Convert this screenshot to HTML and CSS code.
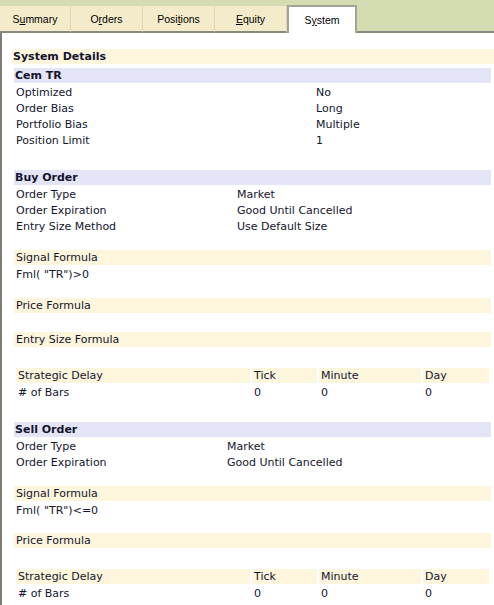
FILE: index.html
```html
<!DOCTYPE html>
<html lang="en">
<head>
    <meta charset="UTF-8">
    <title>System</title>
    <link rel="stylesheet" href="styles.css">
</head>
<body>
    <div class="tabs">
        <div class="tab first">S<u>u</u>mmary</div>
        <div class="tab">O<u>r</u>ders</div>
        <div class="tab">Posi<u>t</u>ions</div>
        <div class="tab"><u>E</u>quity</div>
        <div class="tab active">S<u>y</u>stem</div>
        <div class="fill"></div>
    </div>

    <div class="panel">
        <div class="title">System Details</div>

        <div class="head">Cem TR</div>
        <div class="kv kv-300">
            <span>Optimized</span><span>No</span>
            <span>Order Bias</span><span>Long</span>
            <span>Portfolio Bias</span><span>Multiple</span>
            <span>Position Limit</span><span>1</span>
        </div>

        <div class="head gap-22">Buy Order</div>
        <div class="kv kv-221">
            <span>Order Type</span><span>Market</span>
            <span>Order Expiration</span><span>Good Until Cancelled</span>
            <span>Entry Size Method</span><span>Use Default Size</span>
        </div>

        <div class="band gap-16">Signal Formula</div>
        <div class="line">Fml( "TR")&gt;0</div>
        <div class="band gap-16">Price Formula</div>
        <div class="band gap-19">Entry Size Formula</div>

        <div class="delay gap-21">
            <span class="cell">Strategic Delay</span><span class="cell">Tick</span><span class="cell">Minute</span><span class="cell">Day</span>
            <span># of Bars</span><span>0</span><span>0</span><span>0</span>
        </div>

        <div class="head gap-22">Sell Order</div>
        <div class="kv kv-211">
            <span>Order Type</span><span>Market</span>
            <span>Order Expiration</span><span>Good Until Cancelled</span>
        </div>

        <div class="band gap-16">Signal Formula</div>
        <div class="line">Fml( "TR")&lt;=0</div>
        <div class="band gap-15">Price Formula</div>

        <div class="delay gap-21">
            <span class="cell">Strategic Delay</span><span class="cell">Tick</span><span class="cell">Minute</span><span class="cell">Day</span>
            <span># of Bars</span><span>0</span><span>0</span><span>0</span>
        </div>
    </div>
</body>
</html>
```

FILE: styles.css
```css
body {
    margin: 0;
    background: #fff;
    font-family: "DejaVu Sans", Verdana, sans-serif;
    font-size: 11px;
    color: #14142e;
}
.tabs {
    display: flex;
    align-items: flex-end;
    height: 33px;
    padding-top: 6px;
    box-sizing: border-box;
    background: #d4dcb1;
}
.tab {
    flex: none;
    width: 72px;
    height: 27px;
    box-sizing: border-box;
    padding-top: 2px;
    line-height: 22px;
    text-align: center;
    background: #f3ebc9;
    border-right: 1px solid #ddd6b4;
    border-bottom: 2px solid #8a8a7c;
    font-family: "Liberation Sans", Arial, sans-serif;
    font-size: 10.5px;
    color: #000;
}
.tab.first {
    width: 71px;
}
.tab.active {
    width: 70px;
    height: 28px;
    padding-top: 2px;
    background: #fff;
    border: 2px solid #a4a496;
    border-bottom: none;
}
.fill {
    flex: 1;
    height: 2px;
    background: #8a8a7c;
}
.panel {
    border-left: 2px solid #7e7e76;
    padding-top: 16px;
    min-height: 572px;
    box-sizing: border-box;
}
.title {
    margin-left: 10px;
    padding-left: 1px;
    height: 15px;
    line-height: 16px;
    background: #fdf5dc;
    font-weight: bold;
}
.head {
    margin: 4px 3px 0 12px;
    padding-left: 1px;
    height: 15px;
    line-height: 16px;
    background: #e4e4f7;
    font-weight: bold;
}
.kv {
    display: grid;
    margin: 1px 3px 0 14px;
    line-height: 16px;
}
.kv span {
    padding-top: 1px;
    height: 16px;
    box-sizing: border-box;
}
.kv-300 { grid-template-columns: 300px 1fr; }
.kv-221 { grid-template-columns: 221px 1fr; }
.kv-211 { grid-template-columns: 211px 1fr; }
.band {
    margin: 0 3px 0 12px;
    padding-left: 2px;
    height: 15px;
    line-height: 16px;
    background: #fdf5dc;
}
.line {
    margin: 1px 3px 0 14px;
    padding-top: 1px;
    line-height: 16px;
    height: 16px;
    box-sizing: border-box;
}
.delay {
    display: grid;
    grid-template-columns: 234px 65px 102px 66px;
    column-gap: 2px;
    margin-left: 14px;
    line-height: 16px;
}
.delay span {
    padding-left: 2px;
    padding-top: 1px;
    height: 16px;
    box-sizing: border-box;
}
.delay .cell {
    height: 15px;
    padding-top: 0;
    line-height: 16px;
    margin-bottom: 1px;
    background: #fdf5dc;
}
.gap-15 { margin-top: 15px; }
.gap-16 { margin-top: 16px; }
.gap-19 { margin-top: 19px; }
.gap-21 { margin-top: 21px; }
.gap-22 { margin-top: 22px; }
```
